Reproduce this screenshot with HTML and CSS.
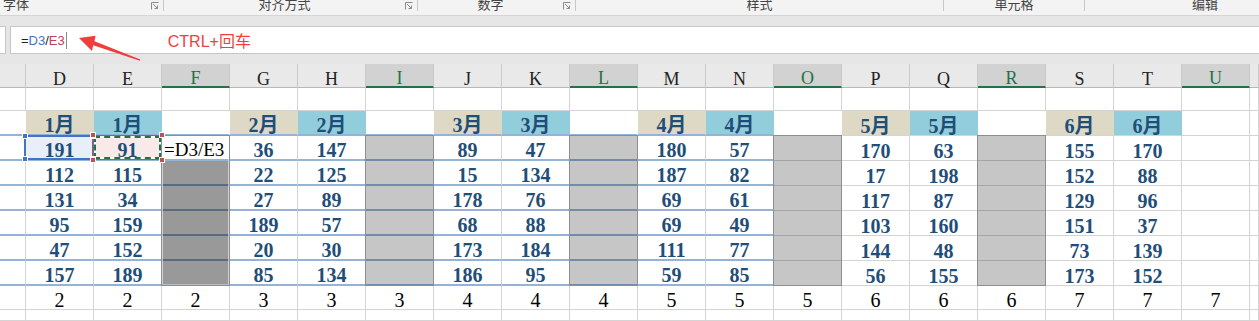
FILE: index.html
```html
<!DOCTYPE html>
<html>
<head>
	<meta charset="utf-8">
	<title>Excel 多区域填充示例</title>
	<link rel="stylesheet" href="styles.css">
</head>
<body>

	<!-- Ribbon group captions (the ribbon itself is scrolled off the top) -->
	<div class="ribbon">
		<div class="group g-font"><span class="label">字体</span><svg class="launcher" viewBox="0 0 8 8"><path d="M0.5 7.5V0.5H7.5M2 2L6.5 6.5M3.5 6.5H6.5V3.5"/></svg></div>
		<div class="group g-align"><span class="label">对齐方式</span><svg class="launcher" viewBox="0 0 8 8"><path d="M0.5 7.5V0.5H7.5M2 2L6.5 6.5M3.5 6.5H6.5V3.5"/></svg></div>
		<div class="group g-number"><span class="label">数字</span><svg class="launcher" viewBox="0 0 8 8"><path d="M0.5 7.5V0.5H7.5M2 2L6.5 6.5M3.5 6.5H6.5V3.5"/></svg></div>
		<div class="group g-style"><span class="label">样式</span></div>
		<div class="group g-cells"><span class="label">单元格</span></div>
		<div class="group g-edit"><span class="label">编辑</span></div>
	</div>

	<!-- Formula bar -->
	<div class="formula-bar">
		<div class="name-box"></div>
		<div class="formula-input">
			<span class="formula">=<span class="ref-d">D3</span>/<span class="ref-e">E3</span></span>
			<span class="caret"></span>
			<span class="note">CTRL+回车</span>
		</div>
		<svg class="arrow" viewBox="0 16 160 48">
			<polygon points="79,38 95.5,35.8 94.5,41.3 140.3,59.4 139.8,60.8 93.2,45.2 92,51"/>
		</svg>
	</div>

	<!-- Worksheet, filled in by the script below -->
	<div class="sheet" id="sheet"></div>

	<script>
		var cols = "CDEFGHIJKLMNOPQRSTUV".split("");

		var months = { D: "1月", E: "1月", G: "2月", H: "2月", J: "3月", K: "3月",
		               M: "4月", N: "4月", P: "5月", Q: "5月", S: "6月", T: "6月" };
		var tan = "DGJMPS";

		var data = {
			D: [191, 112, 131, 95, 47, 157],   E: [91, 115, 34, 159, 152, 189],
			G: [36, 22, 27, 189, 20, 85],      H: [147, 125, 89, 57, 30, 134],
			J: [89, 15, 178, 68, 173, 186],    K: [47, 134, 76, 88, 184, 95],
			M: [180, 187, 69, 69, 111, 59],    N: [57, 82, 61, 49, 77, 85],
			P: [170, 17, 117, 103, 144, 56],   Q: [63, 198, 87, 160, 48, 155],
			S: [155, 152, 129, 151, 73, 173],  T: [170, 88, 96, 37, 139, 152]
		};

		var totals = { D: 2, E: 2, F: 2, G: 3, H: 3, I: 3, J: 4, K: 4, L: 4,
		               M: 5, N: 5, O: 5, P: 6, Q: 6, R: 6, S: 7, T: 7, U: 7 };

		var selected = "FILORU";     // highlighted column headers
		var banded = "CDEFGHIJKLMN"; // columns with the blue row lines

		var sheet = document.getElementById("sheet");

		function addRef(cell, kind) {
			var box = document.createElement("div");
			box.className = "ref " + kind;
			["tl", "tr", "bl", "br"].forEach(function (corner) {
				var h = document.createElement("span");
				h.className = "handle " + corner;
				box.appendChild(h);
			});
			cell.appendChild(box);
		}

		for (var r = 0; r <= 10; r++) {
			for (var i = 0; i < cols.length; i++) {
				var c = cols[i];
				var cell = document.createElement("div");
				var cls = ["cell"];
				var text = "";

				if (r == 0) {
					cls.push("head");
					if (selected.indexOf(c) >= 0) cls.push("sel");
					if (c != "C" && c != "V") text = c;
				} else {
					if (r == 2 && c != "U" && c != "V") cls.push("mon");
					if (r >= 2 && r <= 8 && banded.indexOf(c) >= 0) cls.push("band");

					if (r == 2 && months[c]) {
						text = months[c];
						cls.push("num", tan.indexOf(c) >= 0 ? "tan" : "sky");
					}
					if (r >= 3 && r <= 8 && data[c]) {
						text = data[c][r - 3];
						cls.push("num");
					}
					if (r == 3 && c == "F") {
						text = "=D3/E3";
						cls.push("edit");
					}
					if (r == 3 && c == "D") cls.push("d3");
					if (r == 3 && c == "E") cls.push("e3");
					if (r == 9 && totals[c]) {
						text = totals[c];
						cls.push("total");
					}
				}

				cell.className = cls.join(" ");
				cell.textContent = text;
				if (r == 3 && c == "D") addRef(cell, "blue");
				if (r == 3 && c == "E") addRef(cell, "red");
				sheet.appendChild(cell);
			}
		}

		// Multi-area selection: shading and outlines lie over the cells.
		function overlay(cls, col, rows) {
			var n = cols.indexOf(col) + 1;
			var el = document.createElement("div");
			el.className = cls;
			el.style.gridColumn = n + " / " + (n + 1);
			el.style.gridRow = rows;
			sheet.appendChild(el);
		}

		overlay("shade dark", "F", "5 / 10");
		"ILOR".split("").forEach(function (c) { overlay("shade light", c, "4 / 10"); });
		overlay("frame dark", "F", "4 / 10");
		"ILOR".split("").forEach(function (c) { overlay("frame", c, "4 / 10"); });
	</script>
</body>
</html>
```

FILE: styles.css
```css
* {
	box-sizing: border-box;
}

body {
	margin: 0;
	background: #fff;
	font-family: "Liberation Sans", "Noto Sans CJK SC", sans-serif;
	overflow: hidden;
}

/* ribbon captions */
.ribbon {
	display: flex;
	height: 16px;
	background: #f3f3f3;
	border-bottom: 1px solid #d5d5d5;
	overflow: hidden;
}

.group {
	flex: none;
	display: flex;
	align-items: flex-start;
	height: 11px;
	border-right: 1px solid #c8c8c8;
}

.group .label {
	flex: 1;
	margin-top: -3px;
	text-align: center;
	font-family: "Noto Sans CJK SC", sans-serif;
	font-size: 13px;
	line-height: 13px;
	color: #444;
	white-space: nowrap;
}

.launcher {
	flex: none;
	width: 8px;
	height: 8px;
	margin: 2px 4px 0 0;
	fill: none;
	stroke: #8a8a8a;
	stroke-width: 1;
}

.g-font { width: 164px; }
.g-font .label { text-align: left; padding-left: 3px; }
.g-align { width: 254px; }
.g-number { width: 158px; }
.g-style { width: 368px; }
.g-cells { width: 141px; }
.g-edit { width: 240px; border-right: none; }

/* formula bar */
.formula-bar {
	position: relative;
	display: flex;
	height: 48px;
	padding: 10px 0;
	background: #e6e6e6;
}

.name-box {
	width: 6px;
	margin-right: 4px;
	background: #fff;
	border: 1px solid #c6c6c6;
	border-left: none;
}

.formula-input {
	flex: 1;
	display: flex;
	align-items: center;
	padding-left: 10px;
	background: #fff;
	border: 1px solid #c6c6c6;
	border-right: none;
	font-size: 13px;
	color: #222;
}

.ref-d { color: #4472c4; }
.ref-e { color: #c0405a; }

.caret {
	width: 1px;
	height: 17px;
	margin-left: 1px;
	background: #8a8a8a;
}

.note {
	margin-left: 101px;
	font-size: 16px;
	color: #f23d3d;
}

.arrow {
	position: absolute;
	left: 0;
	top: 0;
	width: 160px;
	height: 48px;
	fill: #f23d3d;
}

/* worksheet */
.sheet {
	position: relative;
	display: grid;
	grid-template-columns: 26px repeat(18, 68px) 9px;
	grid-template-rows: 24px 23px 25px repeat(6, 25px) 24px 11px;
	font-family: "Liberation Serif", "Noto Sans CJK SC", serif;
}

.cell {
	display: flex;
	align-items: flex-end;
	justify-content: center;
	border-right: 1px solid #d4d4d4;
	border-bottom: 1px solid #d4d4d4;
	font-size: 20px;
	line-height: 18px;
	white-space: nowrap;
}

.head {
	background: #e9e9e9;
	border-right-color: #c9c9c9;
	border-bottom-color: #b8b8b8;
	font-size: 18px;
	line-height: 16px;
	color: #222;
}

.head.sel {
	background: #d2d2d2;
	color: #217346;
	border-bottom: 2px solid #217346;
}

.mon { border-right-color: transparent; }
.tan { background: #ddd9c4; }
.sky { background: #92cddc; }

.band { border-bottom: 2px solid #95b3d7; }

.num {
	font-weight: bold;
	color: #1f4e79;
}

.total { color: #000; }

.edit {
	justify-content: flex-start;
	padding-left: 2px;
	font-size: 19px;
	color: #000;
}

/* formula reference highlights */
.d3 { position: relative; background: #e9eff9; }
.e3 { position: relative; background: #f9eaea; }

.ref {
	position: absolute;
	top: -1px;
	right: -1px;
	bottom: -1px;
}

.ref.blue {
	left: -2px;
	border: 2px solid #4472c4;
}

.ref.red {
	left: -1px;
	border: 1px solid #c0504d;
}

.ref.red::before,
.ref.red::after {
	content: "";
	position: absolute;
	inset: 0;
	border: 2px solid #fff;
}

.ref.red::after {
	border: 2px dashed #217346;
}

.handle {
	position: absolute;
	z-index: 1;
	width: 6px;
	height: 6px;
	border: 1px solid #fff;
}

.blue .handle { background: #4472c4; }
.red .handle { background: #c0504d; }

.handle.tl { left: -4px; top: -4px; }
.handle.tr { right: -4px; top: -4px; }
.handle.bl { left: -4px; bottom: -4px; }
.handle.br { right: -4px; bottom: -4px; }

/* selected areas */
.shade {
	position: absolute;
	inset: 0;
}

.shade.light { background: rgba(0, 0, 0, 0.224); }
.shade.dark { background: rgba(0, 0, 0, 0.4); }

.frame {
	position: absolute;
	top: -1px;
	left: -1px;
	right: 0;
	bottom: 0;
	border: 1px solid #8e8e8e;
}

.frame.dark {
	box-shadow: inset 0 0 0 1px rgba(255, 255, 255, 0.55);
}
```
